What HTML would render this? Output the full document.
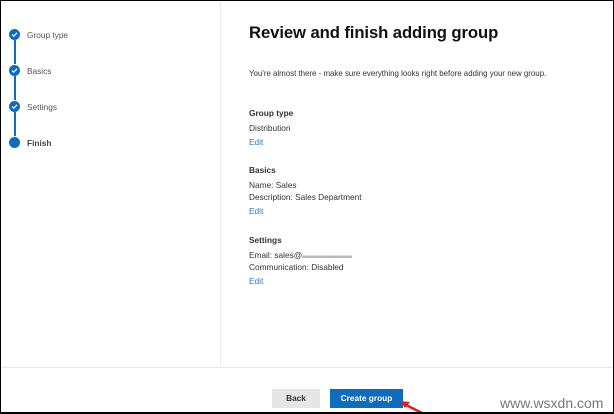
<!DOCTYPE html>
<html><head><style>
*{margin:0;padding:0;box-sizing:border-box}
body{width:614px;height:414px;background:#fff;font-family:"Liberation Sans",sans-serif;position:relative;overflow:hidden}
.frame{position:absolute;left:0;top:0;width:614px;height:414px;border:1px solid #000;border-bottom:2px solid #000}
.t{position:absolute;white-space:nowrap;font-size:8.3px;color:#333}
.b{font-weight:bold;color:#222}
.e{color:#2b79c2}
.dot{position:absolute;left:9px;width:11px;height:11px;border-radius:50%;background:#0f6cbd}
.dot svg{position:absolute;left:2px;top:2px}
.line{position:absolute;left:14px;width:2px;background:#0f6cbd}
</style></head><body>
<div style="position:absolute;left:220px;top:0;width:1px;height:367px;background:#ececec"></div>
<div style="position:absolute;left:0;top:367px;width:614px;height:1px;background:#e6e6e6"></div>

<div class="line" style="top:40px;height:24px"></div>
<div class="line" style="top:76px;height:24px"></div>
<div class="line" style="top:112px;height:24px"></div>
<div class="dot" style="top:29px"><svg width="7" height="7" viewBox="0 0 7 7"><path d="M1 3.6L2.8 5.2L6 1.8" stroke="#fff" stroke-width="1.2" fill="none"/></svg></div>
<div class="dot" style="top:65px"><svg width="7" height="7" viewBox="0 0 7 7"><path d="M1 3.6L2.8 5.2L6 1.8" stroke="#fff" stroke-width="1.2" fill="none"/></svg></div>
<div class="dot" style="top:101px"><svg width="7" height="7" viewBox="0 0 7 7"><path d="M1 3.6L2.8 5.2L6 1.8" stroke="#fff" stroke-width="1.2" fill="none"/></svg></div>
<div class="dot" style="top:137px"></div>
<div class="t" style="left:27px;top:30px;color:#555">Group type</div>
<div class="t" style="left:27px;top:66px;color:#555">Basics</div>
<div class="t" style="left:27px;top:102px;color:#555">Settings</div>
<div class="t b" style="left:27px;top:138px;color:#444">Finish</div>

<div class="t b" style="left:249px;top:23px;font-size:16.7px;color:#111;letter-spacing:-0.1px">Review and finish adding group</div>
<div class="t" style="left:249px;top:69px;font-size:7.9px">You're almost there - make sure everything looks right before adding your new group.</div>
<div class="t b" style="left:249px;top:108px;color:#333">Group type</div>
<div class="t" style="left:249px;top:123px">Distribution</div>
<div class="t e" style="left:249px;top:137px">Edit</div>
<div class="t b" style="left:249px;top:165px;color:#333">Basics</div>
<div class="t" style="left:249px;top:180px">Name: Sales</div>
<div class="t" style="left:249px;top:192px">Description: Sales Department</div>
<div class="t e" style="left:249px;top:206px">Edit</div>
<div class="t b" style="left:249px;top:235px;color:#333">Settings</div>
<div class="t" style="left:249px;top:250px">Email: sales@<span style="color:#bbb">▬▬▬▬▬▬</span></div>
<div class="t" style="left:249px;top:262px">Communication: Disabled</div>
<div class="t e" style="left:249px;top:276px">Edit</div>

<div style="position:absolute;left:272px;top:389px;width:48px;height:19px;background:#e6e6e6;font-size:8.3px;font-weight:bold;color:#333;text-align:center;line-height:19px">Back</div>
<div style="position:absolute;left:330px;top:389px;width:73px;height:19px;background:#0f6cbd;font-size:8.3px;font-weight:bold;color:#fff;text-align:center;line-height:19px">Create group</div>
<svg style="position:absolute;left:396px;top:396px" width="30" height="18"><path d="M26 17L8 8" stroke="#e02020" stroke-width="2.5"/><path d="M4 5L14 6L9 12Z" fill="#e02020"/></svg>
<div class="t" style="left:500px;top:395px;font-size:14px;color:#777">www.wsxdn.com</div>
<div class="frame"></div>
</body></html>
